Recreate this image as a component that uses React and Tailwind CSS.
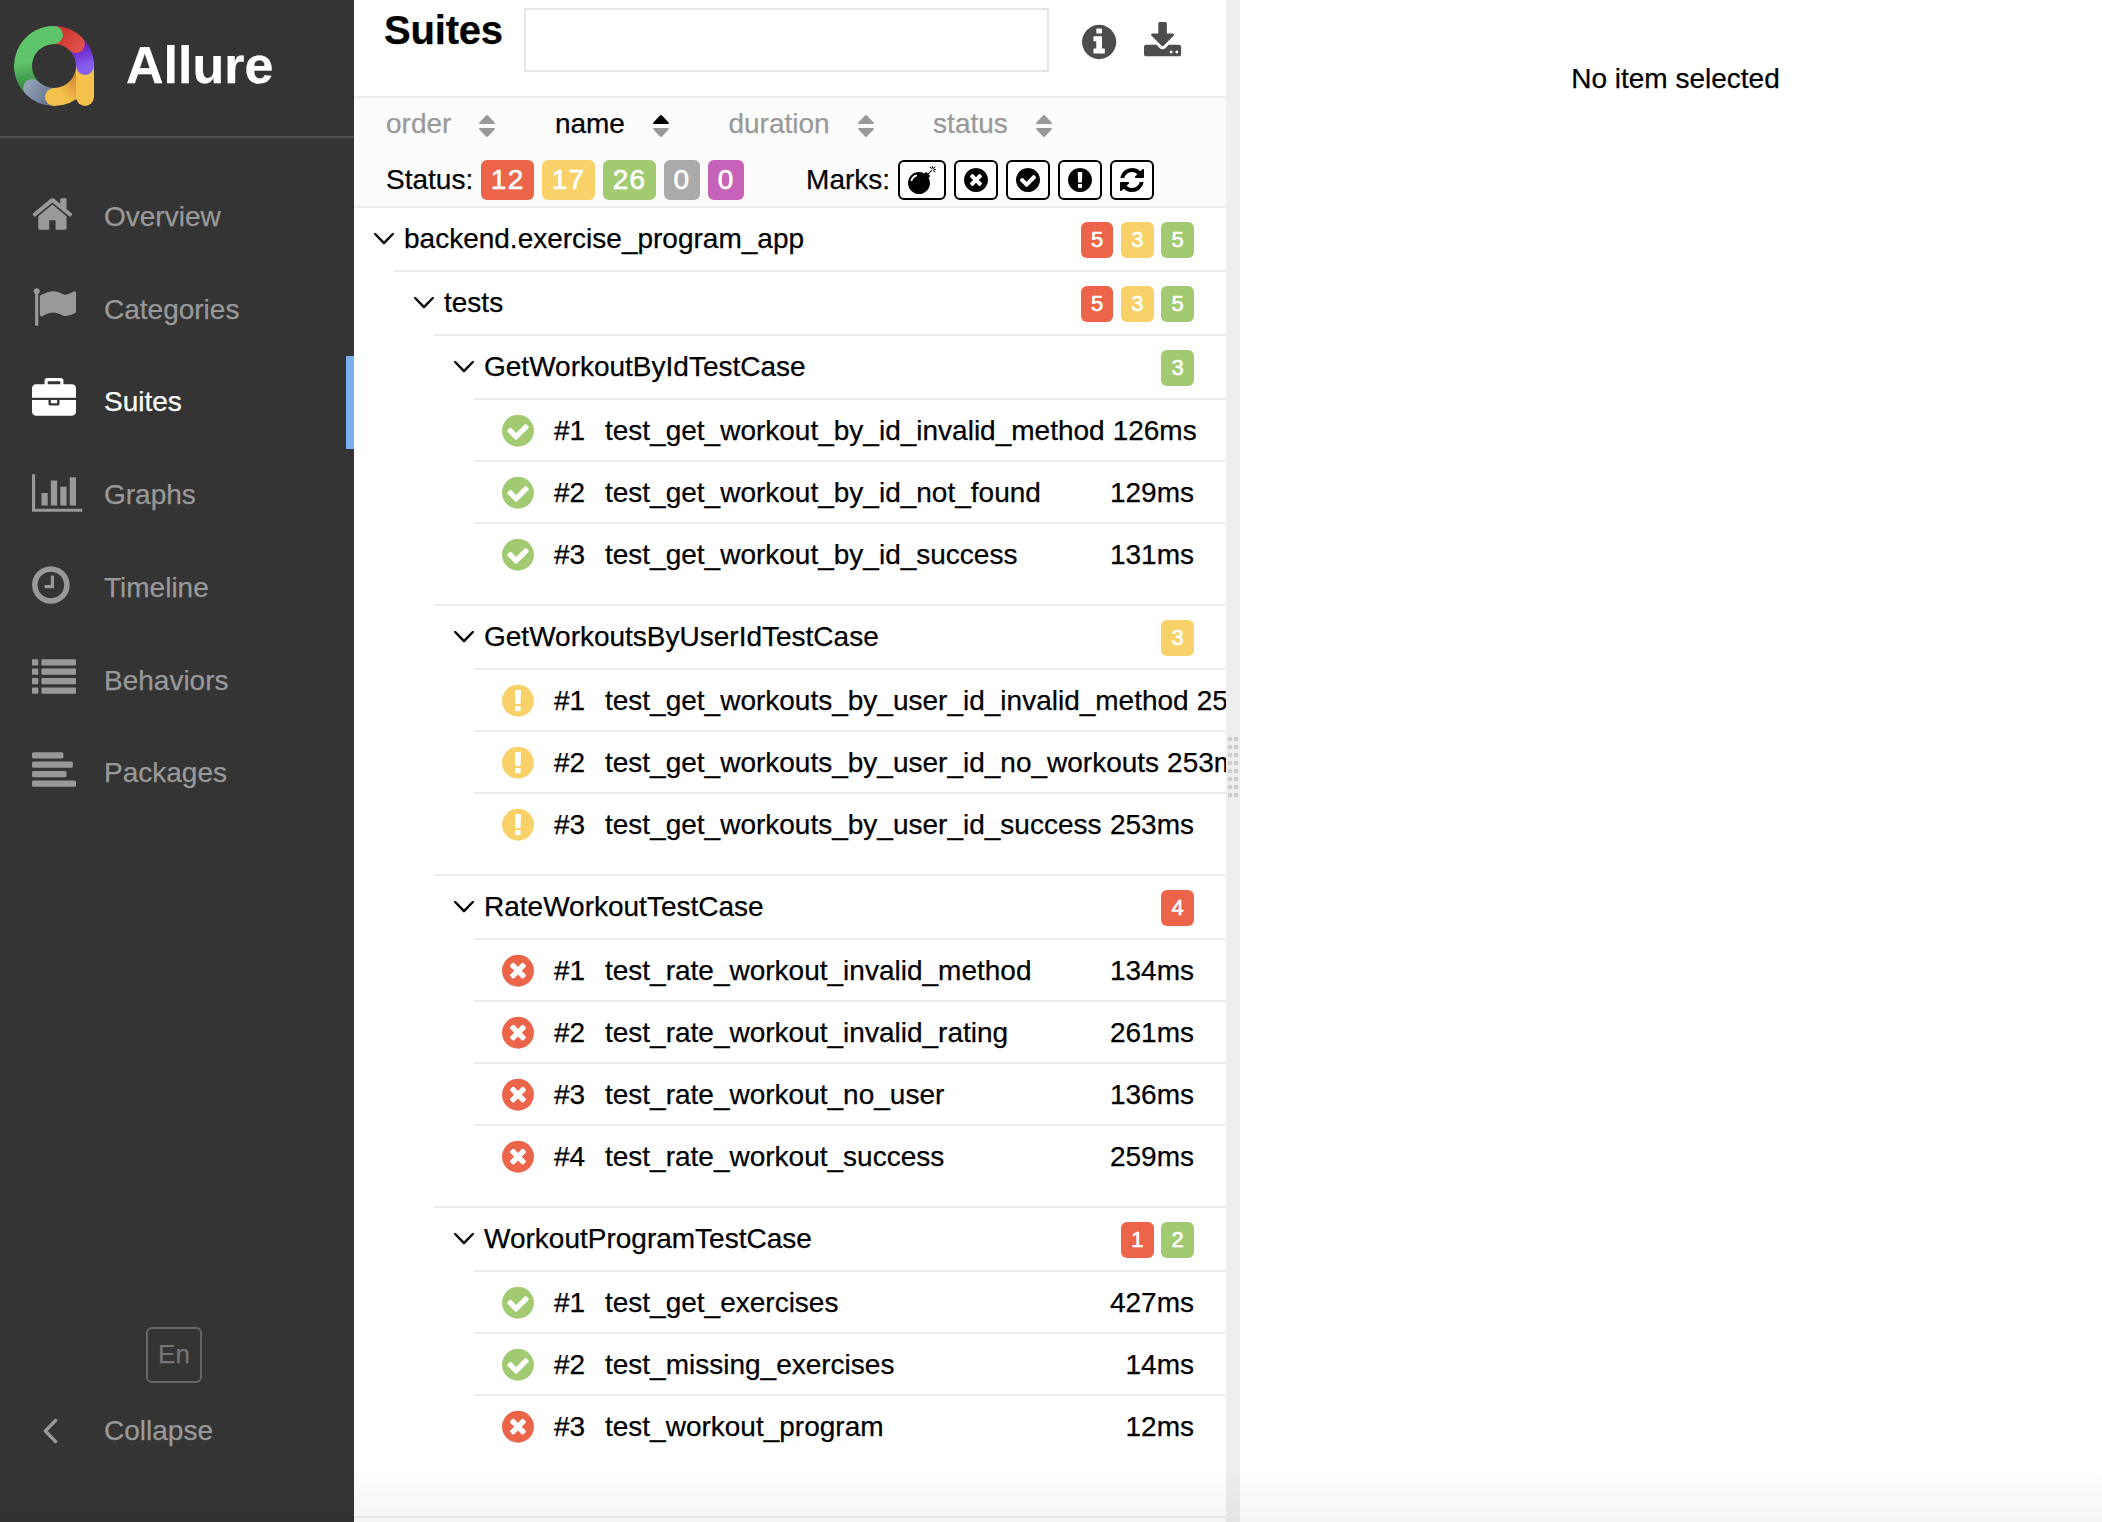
import React from "react";

const CIRCLE =
  "M1664 896q0 209-103 385.5t-279.5 279.5-385.5 103-385.5-103-279.5-279.5-103-385.5 103-385.5 279.5-279.5 385.5-103 385.5 103 279.5 279.5 103 385.5z";

const GLYPHS = {
  home: {
    x: 64,
    w: 1664,
    d: "M1472 992v480q0 26-19 45t-45 19h-384v-384h-256v384h-384q-26 0-45-19t-19-45v-480q0-1 .5-3t.5-3l575-474 575 474q1 2 1 6zm223-69l-62 74q-8 9-21 11h-3q-13 0-21-7l-692-577-692 577q-12 8-24 7-13-2-21-11l-62-74q-8-10-7-23.5t11-21.5l719-599q32-26 76-26t76 26l244 204v-195q0-14 9-23t23-9h192q14 0 23 9t9 23v408l219 182q10 8 11 21.5t-7 23.5z",
  },
  flag: {
    x: 0,
    w: 1792,
    d: "M320 256q0 72-64 110v1266q0 13-9.5 22.5t-22.5 9.5h-64q-13 0-22.5-9.5t-9.5-22.5v-1266q-64-38-64-110 0-53 37.5-90.5t90.5-37.5 90.5 37.5 37.5 90.5zm1472 64v763q0 25-12.5 38.5t-39.5 27.5q-215 116-369 116-61 0-123.5-22t-108.5-48-115.5-48-142.5-22q-192 0-464 146-17 9-33 9-26 0-45-19t-19-45v-742q0-32 31-55 21-14 79-43 236-120 421-120 107 0 200 29t219 88q38 19 88 19 54 0 117.5-21t110-47 88-47 54.5-21q26 0 45 19t19 45z",
  },
  briefcase: {
    x: 0,
    w: 1792,
    d: "M640 256h512v-128h-512v128zm1152 640v480q0 66-47 113t-113 47h-1472q-66 0-113-47t-47-113v-480h672v160q0 26 19 45t45 19h320q26 0 45-19t19-45v-160h672zm-768 0v128h-256v-128h256zm768-480v384h-1792v-384q0-66 47-113t113-47h352v-160q0-40 28-68t68-28h576q40 0 68 28t28 68v160h352q66 0 113 47t47 113z",
  },
  chart: {
    x: 0,
    w: 2048,
    d: "M640 896v512h-256v-512h256zM1024 384v1024h-256v-1024h256zM2048 1536v128h-2048v-1536h128v1408h1920zM1408 640v768h-256v-768h256zM1792 256v1152h-256v-1152h256z",
  },
  clock: {
    x: 128,
    w: 1536,
    d:
      "M1024 544v448q0 14-9 23t-23 9h-320q-14 0-23-9t-9-23v-64q0-14 9-23t23-9h224v-352q0-14 9-23t23-9h64q14 0 23 9t9 23zm416 352q0-148-73-273t-198-198-273-73-273 73-198 198-73 273 73 273 198 198 273 73 273-73 198-198 73-273z" +
      CIRCLE,
  },
  list: {
    x: 0,
    w: 1792,
    d: "M32 128h192q32 0 32 32v192q0 32-32 32h-192q-32 0-32-32v-192q0-32 32-32zM32 512h192q32 0 32 32v192q0 32-32 32h-192q-32 0-32-32v-192q0-32 32-32zM32 896h192q32 0 32 32v192q0 32-32 32h-192q-32 0-32-32v-192q0-32 32-32zM32 1280h192q32 0 32 32v192q0 32-32 32h-192q-32 0-32-32v-192q0-32 32-32zM416 128h1344q32 0 32 32v192q0 32-32 32h-1344q-32 0-32-32v-192q0-32 32-32zM416 512h1344q32 0 32 32v192q0 32-32 32h-1344q-32 0-32-32v-192q0-32 32-32zM416 896h1344q32 0 32 32v192q0 32-32 32h-1344q-32 0-32-32v-192q0-32 32-32zM416 1280h1344q32 0 32 32v192q0 32-32 32h-1344q-32 0-32-32v-192q0-32 32-32z",
  },
  align: {
    x: 0,
    w: 1792,
    d: "M64 128h1152q64 0 64 64v128q0 64-64 64h-1152q-64 0-64-64v-128q0-64 64-64zM64 512h1536q64 0 64 64v128q0 64-64 64h-1536q-64 0-64-64v-128q0-64 64-64zM64 896h1280q64 0 64 64v128q0 64-64 64h-1280q-64 0-64-64v-128q0-64 64-64zM64 1280h1664q64 0 64 64v128q0 64-64 64h-1664q-64 0-64-64v-128q0-64 64-64z",
  },
  passed: {
    x: 128,
    w: 1536,
    d:
      "M1412 734q0-28-18-46l-91-90q-19-19-45-19t-45 19l-408 407-226-226q-19-19-45-19t-45 19l-91 90q-18 18-18 46 0 27 18 45l362 362q19 19 45 19 27 0 46-19l543-543q18-18 18-45z" +
      CIRCLE,
  },
  failed: {
    x: 128,
    w: 1536,
    d:
      "M1277 1122q0-26-19-45l-181-181 181-181q19-19 19-45 0-27-19-46l-90-90q-19-18-46-18-26 0-45 18l-181 181-181-181q-19-18-45-18-27 0-46 18l-90 90q-19 19-19 46 0 26 19 45l181 181-181 181q-19 19-19 45 0 27 19 46l90 90q19 18 46 18 26 0 45-18l181-181 181 181q19 18 45 18 27 0 46-18l90-90q19-19 19-46z" +
      CIRCLE,
  },
  broken: {
    x: 128,
    w: 1536,
    d:
      "M1024 1375v-190q0-14-9-23.5t-22-9.5h-192q-13 0-23 10t-10 23v190q0 13 10 23t23 10h192q13 0 22-9.5t9-23.5zm-2-344l18-621q0-12-10-18-10-8-24-8h-220q-14 0-24 8-10 6-10 18l17 621q0 10 10 17.5t24 7.5h185q14 0 23.5-7.5t10.5-17.5z" +
      CIRCLE,
  },
  info: {
    x: 128,
    w: 1536,
    d:
      "M1152 1376v-160q0-14-9-23t-23-9h-96v-512q0-14-9-23t-23-9h-320q-14 0-23 9t-9 23v160q0 14 9 23t23 9h96v320h-96q-14 0-23 9t-9 23v160q0 14 9 23t23 9h448q14 0 23-9t9-23zm-128-896v-160q0-14-9-23t-23-9h-192q-14 0-23 9t-9 23v160q0 14 9 23t23 9h192q14 0 23-9t9-23z" +
      CIRCLE,
  },
  download: {
    x: 64,
    w: 1664,
    d: "M1344 1344q0-26-19-45t-45-19-45 19-19 45 19 45 45 19 45-19 19-45zm256 0q0-26-19-45t-45-19-45 19-19 45 19 45 45 19 45-19 19-45zm128-224v320q0 40-28 68t-68 28h-1472q-40 0-68-28t-28-68v-320q0-40 28-68t68-28h465l135 136q58 56 136 56t136-56l136-136h464q40 0 68 28t28 68zm-325-569q17 41-14 70l-448 448q-18 19-45 19t-45-19l-448-448q-31-29-14-70 17-39 59-39h256v-448q0-26 19-45t45-19h256q26 0 45 19t19 45v448h256q42 0 59 39z",
  },
  refresh: {
    x: 128,
    w: 1536,
    d: "M1639 1056q0 5-1 7-64 268-268 434.5t-478 166.5q-146 0-282.5-55t-243.5-157l-129 129q-19 19-45 19t-45-19-19-45v-448q0-26 19-45t45-19h448q26 0 45 19t19 45-19 45l-137 137q71 66 161 102t187 36q134 0 250-65t186-179q11-17 53-117 8-23 30-23h192q13 0 22.5 9.5t9.5 22.5zm25-800v448q0 26-19 45t-45 19h-448q-26 0-45-19t-19-45 19-45l138-138q-148-137-349-137-134 0-250 65t-186 179q-11 17-53 117-8 23-30 23h-199q-13 0-22.5-9.5t-9.5-22.5v-7q65-268 270-434.5t480-166.5q146 0 284 55.5t245 156.5l130-129q19-19 45-19t45 19 19 45z",
  },
  bomb: {
    x: 0,
    w: 1792,
    d: "M571 589q-10-25-34-35t-49 0q-108 44-191 127t-127 191q-10 25 0 49t35 34q13 5 24 5 42 0 60-40 34-84 98.5-148.5t148.5-98.5q25-11 35-35t0-49zm942-356l46 46-244 243 68 68q19 19 19 45.5t-19 45.5l-64 64q89 161 89 343 0 143-55.5 273.5t-150 225-225 150-273.5 55.5-273.5-55.5-225-150-150-225-55.5-273.5 55.5-273.5 150-225 225-150 273.5-55.5q182 0 343 89l64-64q19-19 45.5-19t45.5 19l68 68zm8-56q-10 10-22 10-13 0-23-10l-91-90q-9-10-9-23t9-23q10-9 23-9t23 9l90 91q10 9 10 22.5t-10 22.5zm230 230q-11 9-23 9t-23-9l-90-91q-10-9-10-22.5t10-22.5q9-10 22.5-10t22.5 10l91 90q9 10 9 23t-9 23zm41-183q0 14-9 23t-23 9h-96q-14 0-23-9t-9-23 9-23 23-9h96q14 0 23 9t9 23zm-192-192v96q0 14-9 23t-23 9-23-9-9-23v-96q0-14 9-23t23-9 23 9 9 23zm151 55l-91 90q-10 10-22 10-13 0-23-10-10-9-10-22.5t10-22.5l90-91q10-9 23-9t23 9q9 10 9 23t-9 23z",
  },
};

function Glyph({ name, className }) {
  const g = GLYPHS[name];
  return (
    <svg
      viewBox={`${g.x} 0 ${g.w} 1792`}
      fill="currentColor"
      fillRule="evenodd"
      className={`w-auto shrink-0 overflow-visible ${className}`}
    >
      <path d={g.d} />
    </svg>
  );
}

function Logo() {
  return (
    <svg viewBox="0 0 80 80" className="size-20 shrink-0" fill="none" strokeWidth="18" strokeLinecap="round">
      <defs>
        <linearGradient id="green" gradientUnits="userSpaceOnUse" x1="9" y1="36" x2="14" y2="66">
          <stop offset="0" stopColor="#5fc56a" />
          <stop offset="1" stopColor="#31803c" />
        </linearGradient>
        <linearGradient id="slate" gradientUnits="userSpaceOnUse" x1="12" y1="58" x2="40" y2="76">
          <stop offset="0" stopColor="#94a3b8" />
          <stop offset="1" stopColor="#5e6c87" />
        </linearGradient>
        <linearGradient id="amber" gradientUnits="userSpaceOnUse" x1="50" y1="70" x2="66" y2="54">
          <stop offset="0" stopColor="#f4c24c" />
          <stop offset="1" stopColor="#d38a34" />
        </linearGradient>
        <linearGradient id="violet" gradientUnits="userSpaceOnUse" x1="68" y1="20" x2="74" y2="40">
          <stop offset="0" stopColor="#6a1fc4" />
          <stop offset="1" stopColor="#875ff0" />
        </linearGradient>
        <linearGradient id="red" gradientUnits="userSpaceOnUse" x1="46" y1="8" x2="66" y2="24">
          <stop offset="0" stopColor="#cd372f" />
          <stop offset="1" stopColor="#e0524c" />
        </linearGradient>
      </defs>
      <path d="M40 9A31 31 0 0 0 18.1 61.9" stroke="url(#green)" />
      <path d="M18.1 61.9A31 31 0 0 0 40 71" stroke="url(#slate)" />
      <path d="M40 71A31 31 0 0 0 71 40" stroke="url(#amber)" />
      <path d="M71 40V71" stroke="#f4c24c" />
      <path d="M61.9 18.1A31 31 0 0 1 71 40" stroke="url(#violet)" />
      <path d="M40 9A31 31 0 0 1 61.9 18.1" stroke="url(#red)" />
      <path d="M40 9A31 31 0 0 0 22 14.8" stroke="#5fc56a" />
    </svg>
  );
}

const NAV = [
  ["home", "Overview"],
  ["flag", "Categories"],
  ["briefcase", "Suites"],
  ["chart", "Graphs"],
  ["clock", "Timeline"],
  ["list", "Behaviors"],
  ["align", "Packages"],
];

function Sidebar() {
  return (
    <aside className="flex w-[354px] shrink-0 flex-col bg-[#343434] text-[#999]">
      <div className="flex h-[138px] items-center border-b-2 border-[#4f4f4f] pb-1 pl-[14px]">
        <Logo />
        <span className="ml-8 pb-0.5 text-[52px] leading-none font-bold text-white">Allure</span>
      </div>
      <nav className="mt-[32.5px]">
        {NAV.map(([icon, label]) => {
          const active = label === "Suites";
          return (
            <div
              key={label}
              className={`flex h-[92.75px] items-center border-r-8 pl-8 ${
                active ? "border-[#7ab1ee] text-white" : "border-transparent"
              }`}
            >
              <div className="w-[72px] pb-[5px]">
                <Glyph name={icon} className="h-11" />
              </div>
              <span>{label}</span>
            </div>
          );
        })}
      </nav>
      <div className="mt-auto ml-[146px] flex size-14 items-center justify-center rounded-md border-2 border-[#666] pb-0.5 text-[26px] text-[#757575]">
        En
      </div>
      <div className="mt-6 mb-[68px] flex h-[47px] items-center pl-[42px]">
        <svg viewBox="0 0 16 26" className="h-[26px] w-4" fill="none" stroke="currentColor" strokeWidth="3.4" strokeLinecap="round" strokeLinejoin="round">
          <path d="M13.6 2.4L3.4 13l10.2 10.6" />
        </svg>
        <span className="ml-[46px]">Collapse</span>
      </div>
    </aside>
  );
}

function Sorter({ label, active }) {
  return (
    <div className={`flex items-center gap-7 ${active ? "text-black" : "text-[#999]"}`}>
      <span>{label}</span>
      <svg viewBox="0 0 16 22" className="mt-1 h-[22px] w-4">
        <path d="M7 .4q1-.8 2 0L15.6 7.5q.8 1.5-.6 1.5H1Q-.4 9 .4 7.5z" fill="currentColor" />
        <path d="M7 21.6q1 .8 2 0L15.6 14.5q.8-1.5-.6-1.5H1q-1.4 0-.6 1.5z" fill="#999" />
      </svg>
    </div>
  );
}

const COLORS = {
  failed: "bg-[#ec654a]",
  broken: "bg-[#f8d268]",
  passed: "bg-[#a2cb71]",
  skipped: "bg-[#aaa]",
  unknown: "bg-[#c663b9]",
};
const ICON_COLORS = {
  failed: "text-[#ec654a]",
  broken: "text-[#f8d268]",
  passed: "text-[#a2cb71]",
};

const STATUSES = [
  ["failed", 12],
  ["broken", 17],
  ["passed", 26],
  ["skipped", 0],
  ["unknown", 0],
];
const MARKS = ["bomb", "failed", "passed", "broken", "refresh"];

const CASES = [
  {
    name: "GetWorkoutByIdTestCase",
    counts: [["passed", 3]],
    tests: [
      ["passed", "test_get_workout_by_id_invalid_method", "126ms"],
      ["passed", "test_get_workout_by_id_not_found", "129ms"],
      ["passed", "test_get_workout_by_id_success", "131ms"],
    ],
  },
  {
    name: "GetWorkoutsByUserIdTestCase",
    counts: [["broken", 3]],
    tests: [
      ["broken", "test_get_workouts_by_user_id_invalid_method", "254ms"],
      ["broken", "test_get_workouts_by_user_id_no_workouts", "253ms"],
      ["broken", "test_get_workouts_by_user_id_success", "253ms"],
    ],
  },
  {
    name: "RateWorkoutTestCase",
    counts: [["failed", 4]],
    tests: [
      ["failed", "test_rate_workout_invalid_method", "134ms"],
      ["failed", "test_rate_workout_invalid_rating", "261ms"],
      ["failed", "test_rate_workout_no_user", "136ms"],
      ["failed", "test_rate_workout_success", "259ms"],
    ],
  },
  {
    name: "WorkoutProgramTestCase",
    counts: [
      ["failed", 1],
      ["passed", 2],
    ],
    tests: [
      ["passed", "test_get_exercises", "427ms"],
      ["passed", "test_missing_exercises", "14ms"],
      ["failed", "test_workout_program", "12ms"],
    ],
  },
];

function GroupRow({ name, counts }) {
  return (
    <div className="flex h-16 items-center border-t-2 border-[#eceded] pr-8 pl-5">
      <svg viewBox="0 0 20 12" className="h-3 w-5" fill="none" stroke="currentColor" strokeWidth="2.4" strokeLinecap="round" strokeLinejoin="round">
        <path d="M1.2 1L10 10.2 18.8 1" />
      </svg>
      <span className="ml-2.5">{name}</span>
      <div className="mt-0.5 ml-auto flex gap-[7.6px]">
        {counts.map(([status, n]) => (
          <span
            key={status}
            className={`flex h-9 w-[32.7px] items-center justify-center rounded-md text-[22px] leading-none text-white [-webkit-text-stroke:0.6px_white] ${COLORS[status]}`}
          >
            {n}
          </span>
        ))}
      </div>
    </div>
  );
}

function TestRow({ status, index, name, time }) {
  return (
    <div className="flex h-[62px] items-center border-t-2 border-[#eceded] pt-0.5 pr-8 pl-7 whitespace-nowrap">
      <Glyph name={status} className={`h-[37.3px] ${ICON_COLORS[status]}`} />
      <span className="ml-5 w-[51px] shrink-0">#{index}</span>
      <span className="mr-2 shrink-0 grow">{name}</span>
      <span className="shrink-0">{time}</span>
    </div>
  );
}

const PROGRAM_COUNTS = [
  ["failed", 5],
  ["broken", 3],
  ["passed", 5],
];

function SuitesPanel() {
  return (
    <section className="flex w-[872px] shrink-0 flex-col overflow-hidden bg-white">
      <header className="flex h-24 items-start pl-[30px]">
        <h1 className="w-[140px] text-[40px] leading-[60px] font-bold tracking-[-0.2px]">Suites</h1>
        <input className="mt-2 h-16 w-[525px] border-2 border-[#e5e5e5] bg-white outline-none" />
        <Glyph name="info" className="mt-[21.5px] ml-[33px] h-10 text-[#4d4d4d]" />
        <Glyph name="download" className="mt-[21.5px] ml-7 h-10 text-[#4d4d4d]" />
      </header>
      <div className="h-[110px] shrink-0 border-t-2 border-[#eceded] bg-[#fcfcfc] pl-8">
        <div className="flex h-[52px] items-center gap-[59.5px]">
          <Sorter label="order" />
          <Sorter label="name" active />
          <Sorter label="duration" />
          <Sorter label="status" />
        </div>
        <div className="mt-2.5 flex h-10 items-center">
          <span>Status:</span>
          <div className="ml-2 flex gap-2">
            {STATUSES.map(([status, n]) => (
              <span
                key={status}
                className={`flex h-10 items-center rounded-md px-[9.6px] tracking-[1.3px] text-white [-webkit-text-stroke:0.6px_white] ${COLORS[status]}`}
              >
                {n}
              </span>
            ))}
          </div>
          <span className="ml-[62px]">Marks:</span>
          <div className="ml-2 flex gap-2">
            {MARKS.map((m) => (
              <span key={m} className="flex h-10 items-center rounded-md border-2 border-black bg-white px-2">
                <Glyph name={m} className="h-7" />
              </span>
            ))}
          </div>
        </div>
      </div>
      <div>
        <GroupRow name="backend.exercise_program_app" counts={PROGRAM_COUNTS} />
        <div className="ml-10">
          <GroupRow name="tests" counts={PROGRAM_COUNTS} />
          <div className="ml-10">
            {CASES.map((c) => (
              <div key={c.name} className="pb-5">
                <GroupRow name={c.name} counts={c.counts} />
                <div className="ml-10">
                  {c.tests.map(([status, name, time], i) => (
                    <TestRow key={name} status={status} index={i + 1} name={name} time={time} />
                  ))}
                </div>
              </div>
            ))}
          </div>
        </div>
      </div>
      <div className="mt-auto h-1.5 shrink-0 border-t-2 border-[#eceded]" />
    </section>
  );
}

function Gutter() {
  return (
    <div className="flex w-[14px] shrink-0 justify-center bg-[#eceef0] pt-[737px]">
      <div className="grid h-[60px] grid-cols-2 gap-x-0.5 gap-y-1">
        {Array.from({ length: 16 }, (_, i) => (
          <span key={i} className="size-1 bg-[#cfcfcf]" />
        ))}
      </div>
    </div>
  );
}

export default function App() {
  return (
    <div className="relative flex h-[1522px] w-[2102px] overflow-hidden bg-white font-['Liberation_Sans',Arial,sans-serif] text-[28px] leading-none text-black [-webkit-text-stroke:0.25px]">
      <Sidebar />
      <SuitesPanel />
      <Gutter />
      <main className="flex flex-1 justify-center pt-[65px] pl-[9px]">No item selected</main>
      <div className="pointer-events-none absolute inset-x-0 bottom-0 h-14 bg-linear-to-b from-transparent to-black/4" />
    </div>
  );
}
